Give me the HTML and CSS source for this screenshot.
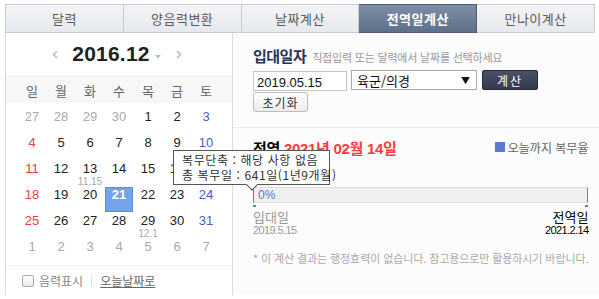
FILE: index.html
```html
<!DOCTYPE html>
<html lang="ko">
<head>
<meta charset="utf-8">
<title>전역일계산</title>
<link rel="stylesheet" href="styles.css">
</head>
<body>
<div class="wrap">
  <ul class="tabs">
    <li>달력</li>
    <li>양음력변환</li>
    <li>날짜계산</li>
    <li class="on">전역일계산</li>
    <li>만나이계산</li>
  </ul>
  <div class="body">
    <div class="cal">
      <div class="cal-head">
        <svg class="chev" width="6" height="9" viewBox="0 0 6 9"><path d="M5 1 L1.5 4.5 L5 8" fill="none" stroke="#bbb" stroke-width="1.6"/></svg>
        <span class="ym">2016.12</span>
        <svg class="caret" width="6" height="4" viewBox="0 0 6 4"><path d="M0 0 H6 L3 3.5 Z" fill="#bbb"/></svg>
        <svg class="chev next" width="6" height="9" viewBox="0 0 6 9"><path d="M1 1 L4.5 4.5 L1 8" fill="none" stroke="#bbb" stroke-width="1.6"/></svg>
      </div>
      <div class="week">
        <span>일</span><span>월</span><span>화</span><span>수</span><span>목</span><span>금</span><span>토</span>
      </div>
      <div class="days">
        <div class="d off">27</div><div class="d off">28</div><div class="d off">29</div><div class="d off">30</div><div class="d">1</div><div class="d">2</div><div class="d sat">3</div>
        <div class="d sun">4</div><div class="d">5</div><div class="d">6</div><div class="d">7</div><div class="d">8</div><div class="d">9</div><div class="d sat">10</div>
        <div class="d sun">11</div><div class="d">12</div><div class="d">13<small>11.15</small></div><div class="d">14</div><div class="d">15</div><div class="d">16</div><div class="d sat">17</div>
        <div class="d sun">18</div><div class="d">19</div><div class="d">20</div><div class="d today">21</div><div class="d">22</div><div class="d">23</div><div class="d sat">24</div>
        <div class="d sun">25</div><div class="d">26</div><div class="d">27</div><div class="d">28</div><div class="d">29<small>12.1</small></div><div class="d">30</div><div class="d sat">31</div>
        <div class="d off">1</div><div class="d off">2</div><div class="d off">3</div><div class="d off">4</div><div class="d off">5</div><div class="d off">6</div><div class="d off">7</div>
      </div>
      <div class="cal-foot">
        <span class="chk"></span>
        <span class="lunar">음력표시</span>
        <span class="sep"></span>
        <span class="todaylink">오늘날짜로</span>
      </div>
    </div>
    <div class="calc">
      <div class="entry">
        <div class="entry-title"><strong>입대일자</strong><span class="hint">직접입력 또는 달력에서 날짜를 선택하세요</span></div>
        <div class="entry-row">
          <input class="date-in" type="text" value="2019.05.15">
          <div class="sel"><span>육군/의경</span><span class="arr">▼</span></div>
          <button class="btn-calc" type="button">계산</button>
        </div>
        <button class="btn-reset" type="button">초기화</button>
      </div>
      <div class="result">
        <div class="res-title">
          <div class="res-date"><b class="lbl">전역</b> <b class="red">2021년 02월 14일</b></div>
          <div class="legend"><span class="sq"></span>오늘까지 복무율</div>
        </div>
        <div class="bar"><span class="pct">0%</span></div>
        <div class="ticks"><span></span><span></span></div>
        <div class="ends">
          <span class="start">입대일</span>
          <span class="end">전역일</span>
        </div>
        <div class="ends dates">
          <span class="start">2019.5.15</span>
          <span class="end">2021.2.14</span>
        </div>
        <p class="note">* 이 계산 결과는 행정효력이 없습니다. 참고용으로만 활용하시기 바랍니다.</p>
      </div>
    </div>
    <div class="tooltip">
      <p>복무단축 : 해당 사항 없음</p>
      <p>총 복무일 : 641일(1년9개월)</p>
    </div>
  </div>
</div>
</body>
</html>
```
FILE: styles.css
```css
* { box-sizing: border-box; }
html, body { margin: 0; padding: 0; background: #fff; }
body { font-family: "Noto Sans CJK KR", "Liberation Sans", sans-serif; color: #333; }
.wrap { width: 590px; margin: 4px 0 0 5px; }

.tabs { display: flex; list-style: none; margin: 0; padding: 0; height: 29px; }
.tabs li {
  flex: 1; display: flex; align-items: center; justify-content: center;
  border: 1px solid #c8ccd2; border-left: 0;
  background: linear-gradient(#f3f4f6, #e6e9ed);
  font-size: 13px; color: #5a5a5a; letter-spacing: 0.5px;
}
.tabs li:first-child { border-left: 1px solid #c8ccd2; }
.tabs li.on {
  background: linear-gradient(#7d8ea6, #5f7089);
  border-color: #4f5d72; color: #fff; font-weight: bold;
}

.body { position: relative; display: flex; height: 262px; }

.cal {
  width: 228px; flex: none; display: flex; flex-direction: column;
  border: 1px solid #dcdcdc; border-top: 0; background: #fff;
  height: 263px;
}
.cal-head { height: 42px; display: flex; align-items: center; justify-content: center; padding-right: 4px; }
.ym { font-family: "Liberation Sans", Arial, sans-serif; font-weight: bold; font-size: 21px; color: #222; margin: 0 5px 0 14px; letter-spacing: 0.2px; }
.caret { margin-top: 5px; }
.chev.next { margin-left: 15px; }
.week {
  height: 28px; background: #f7f7f7;
  display: grid; grid-template-columns: repeat(7, 29px); justify-content: center;
}
.week span { text-align: center; font-size: 13px; line-height: 31px; color: #666; }
.days {
  padding-top: 6px; height: 162px;
  display: grid; grid-template-columns: repeat(7, 29px); grid-auto-rows: 26px; justify-content: center;
}
.d {
  height: 25px; width: 28px; justify-self: center;
  display: flex; flex-direction: column; align-items: center;
  font-family: "Liberation Sans", Arial, sans-serif; font-size: 13px; line-height: 15px; color: #222;
}
.d small { font-size: 10px; line-height: 11px; color: #aaa; margin-top: 0; }
.d.off { color: #aaa; }
.d.sun { color: #ec3b3f; }
.d.sat { color: #4b5cc0; }
.d.today { background: #72a3eb; border: 1px solid #5b8ddc; color: #fff; font-weight: bold; line-height: 13px; padding-top: 0; }
.cal-foot {
  flex: 1; border-top: 1px solid #eee;
  display: flex; align-items: center; padding-left: 16px; font-size: 12px;
}
.chk { width: 12px; height: 12px; border: 1px solid #aaa; border-radius: 2px; background: linear-gradient(#fff, #e9e9e9); margin-right: 5px; }
.lunar { color: #888; }
.sep { width: 1px; height: 11px; background: #ddd; margin: 0 8px; }
.todaylink { color: #666; text-decoration: underline; }

.calc {
  flex: 1; height: 263px; background: #fcfcfc;
  border-right: 1px solid #dcdcdc; border-bottom: 1px solid #dcdcdc;
  display: flex; flex-direction: column;
}
.entry { padding: 12px 20px 0; height: 95px; border-bottom: 1px solid #ececec; }
.entry-title { display: flex; align-items: baseline; height: 18px; }
.entry-title strong { font-size: 15px; color: #283457; font-weight: bold; margin-right: 6px; letter-spacing: -0.5px; }
.hint { font-size: 11px; color: #999; letter-spacing: -0.2px; }
.entry-row { display: flex; margin-top: 7px; height: 20px; }
.date-in {
  width: 94px; height: 20px; margin: 1px 4px 0 0; border: 1px solid #c4c4c4; padding: 2px 3px 0;
  font-family: "Liberation Sans", Arial, sans-serif; font-size: 13px; color: #111; background: #fff;
}
.sel {
  width: 126px; height: 20px; border: 1px solid #a9a9a9; background: #fff;
  display: flex; justify-content: space-between; align-items: center; padding: 0 6px 0 5px;
  font-size: 13px; color: #111;
}
.arr { font-size: 9px; color: #111; }
.btn-calc {
  width: 56px; height: 20px; margin-left: 5px; border: 1px solid #232a3a; border-radius: 2px;
  background: linear-gradient(#4a5166, #343b4d); color: #fff; font-family: inherit; font-size: 12px; padding: 0; letter-spacing: 2px;
}
.btn-reset {
  display: block; width: 55px; height: 20px; margin-top: 2px; border: 1px solid #bcbcbc; border-radius: 3px;
  background: linear-gradient(#fff, #ececec); color: #333; font-family: inherit; font-size: 12px; padding: 0; letter-spacing: 1px;
}

.result { padding: 11px 20px 0; }
.res-title { display: flex; justify-content: space-between; align-items: center; height: 16px; }
.res-date { font-size: 15px; letter-spacing: -0.3px; }
.lbl { color: #000; }
.red { color: #ff3a3a; font-family: "Liberation Sans", "Noto Sans CJK KR", sans-serif; }
.legend { display: flex; align-items: center; font-size: 12px; color: #666; padding-right: 0; }
.sq { width: 10px; height: 10px; background: #5a7bd1; margin-right: 3px; }
.bar {
  margin-top: 32px; height: 16px; background: #efefef;
  border: 1px solid #e0e0e0; border-left: 1px solid #5577cc; border-right: 1px solid #6a7fb8;
  display: flex; align-items: center; padding-left: 4px;
}
.pct { font-family: "Liberation Sans", Arial, sans-serif; font-size: 12px; color: #5a78d0; }
.ticks { display: flex; justify-content: space-between; height: 7px; padding-top: 2px; }
.ticks span { width: 3px; height: 2px; background: #5a7bd1; }
.ends { display: flex; justify-content: space-between; font-size: 13px; line-height: 14px; }
.ends .start { color: #999; }
.ends .end { color: #000; }
.dates { font-family: "Liberation Sans", Arial, sans-serif; font-size: 11px; line-height: 12px; letter-spacing: -0.6px; }
.note { margin: 15px 0 0; font-size: 11px; line-height: 14px; color: #aaa; letter-spacing: -0.1px; white-space: nowrap; }

.tooltip {
  position: absolute; left: 168px; top: 117px; width: 157px; height: 35px;
  background: #fff; border: 1px solid #555; padding: 1px 0 0 8px;
  font-size: 12px; color: #333; line-height: 15px; letter-spacing: 0.6px;
}
.tooltip p { margin: 0; white-space: nowrap; }
.tooltip::after {
  content: ""; position: absolute; left: 74px; bottom: -5px; width: 7px; height: 7px;
  background: #fff; border-right: 1px solid #555; border-bottom: 1px solid #555; transform: rotate(45deg);
}
```
